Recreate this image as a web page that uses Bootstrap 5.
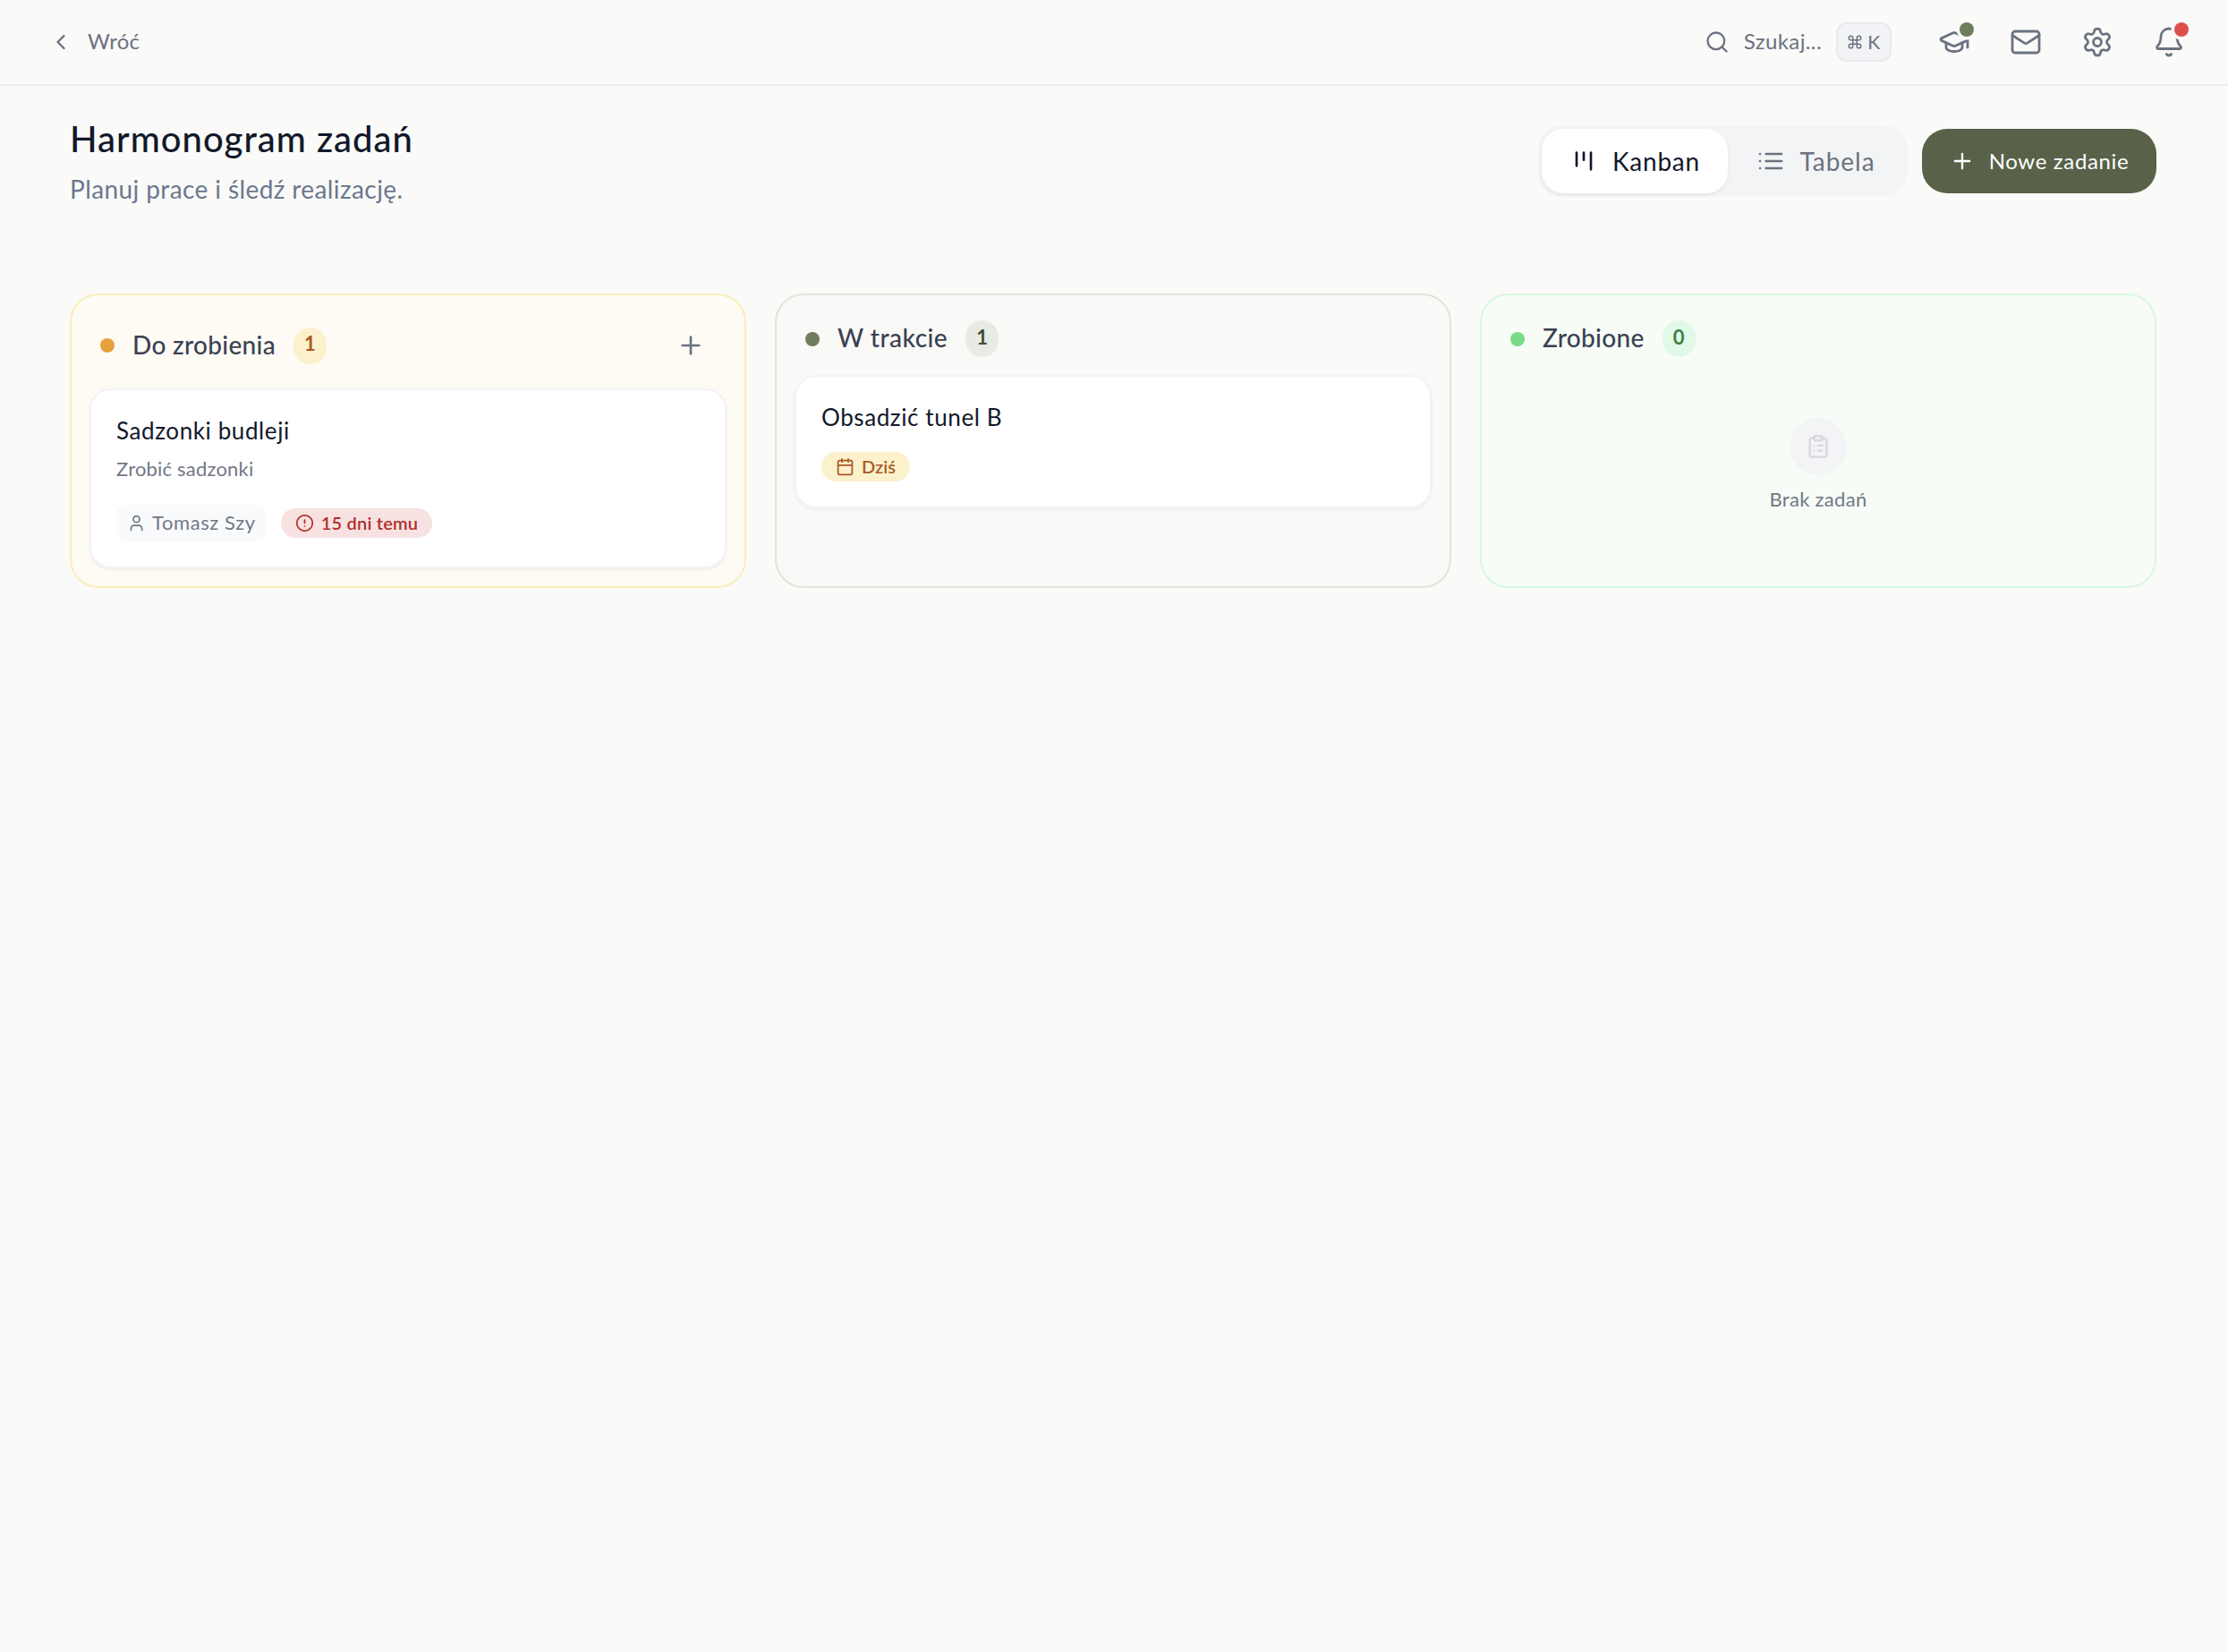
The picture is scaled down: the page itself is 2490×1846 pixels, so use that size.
<!DOCTYPE html>
<html lang="pl">
<head>
<meta charset="utf-8">
<meta name="viewport" content="width=device-width, initial-scale=1">
<title>Harmonogram zadań</title>
<link href="https://cdn.jsdelivr.net/npm/bootstrap@5.3.0/dist/css/bootstrap.min.css" rel="stylesheet">
<style>
  body { background: #fafaf8; font-family: Lato, "Open Sans", sans-serif; color: #12182a; line-height: 1.2; min-height: 100vh; }
  svg { flex: none; fill: none; stroke: currentColor; stroke-width: 2; stroke-linecap: round; stroke-linejoin: round; display: block; }
  .txt { padding-bottom: .03em; white-space: nowrap; }
  .ic20 { width: 21px; height: 21px; } .ic28 { width: 28px; height: 28px; } .ic32 { width: 32px; height: 32px; } .ic36 { width: 36px; height: 36px; }

  .topbar { height: 96px; border-bottom: 2px solid #edeef2; padding: 0 26px 0 54px; color: #6b7280; font-size: 24px; }
  .back-link { gap: 16px; color: inherit; letter-spacing: .3px; }
  .search-box { gap: 16px; letter-spacing: .4px; margin-right: 30px; }
  .key-hint { width: 62px; height: 44px; border: 2px solid #e8eaee; border-radius: 12px; background: #f2f3f6; font-size: 21px; gap: 5px; }
  .key-hint svg { width: 18px; height: 18px; }
  .tool-btn { width: 80px; height: 80px; color: #6b7280; }
  .tool-btn svg { stroke-width: 1.85; }
  .alert-dot { position: absolute; width: 16px; height: 16px; border-radius: 50%; right: 18px; top: 18px; box-shadow: 0 0 0 3.5px #fafaf8; }

  .page { padding: 30px 80px 0 78px; }
  .page-head { height: 108px; }
  .page-title { font-size: 40px; font-weight: 500; line-height: 56px; letter-spacing: 1px; margin: 1px 0 8px; }
  .page-sub { font-size: 28px; line-height: 40px; letter-spacing: .4px; color: #6b7890; }
  .switcher { height: 80px; padding: 4px; border-radius: 28px; background: #f3f4f6; margin-right: 16px; }
  .switcher .seg { height: 72px; border-radius: 24px; gap: 16px; font-size: 28px; font-weight: 400; color: #6b7280; padding: 0; }
  .seg.seg-a { width: 208px; letter-spacing: .8px; }
  .seg.seg-b { width: 197px; letter-spacing: 1px; }
  .switcher .seg.active { background: #fff; color: #12182a; box-shadow: 0 2px 4px rgba(16,24,40,.07); }
  .new-btn { width: 262px; height: 72px; border-radius: 28px; background: #596249; color: #fff; gap: 16px; font-size: 24px; font-weight: 400; letter-spacing: .65px; }

  .board { margin-top: 94px; display: grid; grid-template-columns: repeat(3, 756px); gap: 32px; }
  .lane { min-height: 329px; border: 2px solid; border-radius: 32px; padding: 20px; }
  .lane-todo { background: #fefbf5; border-color: #fbedb8; }
  .lane-doing { background: #f9f9f7; border-color: #e2e4dc; }
  .lane-done { background: #f7fcf7; border-color: #d9f7df; }
  .lane-head { padding: 8px 12px; margin-bottom: 12px; }
  .lane-dot { width: 16px; height: 16px; border-radius: 50%; margin-right: 20px; }
  .lane-name { font-size: 28px; font-weight: 500; color: #3a4252; letter-spacing: .3px; margin-right: 20px; }
  .lane-doing .lane-name { letter-spacing: .5px; }
  .count { width: 37px; height: 41px; border-radius: 20px; font-size: 22px; font-weight: 700; padding-bottom: 3px; }
  .lane-todo .lane-dot { background: #e7a13c; } .lane-todo .count { background: #fcf1cd; color: #a85a26; }
  .lane-doing .lane-dot { background: #6f7d5d; } .lane-doing .count { background: #e8ebe4; color: #424c36; }
  .lane-done .lane-dot { background: #79db88; } .lane-done .count { background: #e1f9e7; color: #3c8045; }
  .add-btn { width: 56px; height: 56px; color: #6b7280; }

  .task { border: 2px solid #f2f3f6; border-radius: 24px; background: #fff; padding: 28px; box-shadow: 0 2px 4px rgba(16,24,40,.05); }
  .task-name { font-size: 26px; font-weight: 400; line-height: 36px; letter-spacing: .6px; margin: -1px 0 21px; }
  .task-name.tight { margin-bottom: 8px; }
  .task-note { font-size: 22px; line-height: 36px; letter-spacing: .2px; color: #717885; margin: -1px 0 22px; }
  .person { height: 41px; padding: 0 12px; border-radius: 12px; background: #f9fafc; color: #717885; font-size: 22px; letter-spacing: .6px; gap: 7px; }
  .due { height: 33px; padding: 0 16px; border-radius: 17px; font-size: 20px; font-weight: 600; gap: 8px; }
  .due-late { background: #f8e1e1; color: #ae2f2a; letter-spacing: .2px; }
  .due-today { background: #fcf1cd; color: #a85a26; letter-spacing: .1px; }
  .empty-lane { padding-top: 48px; gap: 13px; font-size: 22px; line-height: 28px; color: #717885; letter-spacing: .3px; }
  .empty-icon { width: 64px; height: 64px; border-radius: 50%; background: #f3f4f6; color: #d6d8de; }
</style>
</head>
<body>
<header class="topbar d-flex align-items-center justify-content-between">
  <a href="#" class="back-link d-flex align-items-center text-decoration-none">
    <svg class="ic28" viewBox="0 0 24 24"><path d="m15 18-6-6 6-6"/></svg>
    <span class="txt">Wróć</span>
  </a>
  <div class="d-flex align-items-center">
    <div class="search-box d-flex align-items-center">
      <svg class="ic28" viewBox="0 0 24 24" stroke-width="1.8"><circle cx="11" cy="11" r="8"/><path d="m21 21-4.3-4.3"/></svg>
      <span class="txt">Szukaj...</span>
      <span class="key-hint d-flex align-items-center justify-content-center"><svg viewBox="0 0 24 24"><path d="M15 6v12a3 3 0 1 0 3-3H6a3 3 0 1 0 3 3V6a3 3 0 1 0-3 3h12a3 3 0 1 0-3-3"/></svg><span class="txt">K</span></span>
    </div>
    <div class="d-flex align-items-center">
      <a href="#" class="tool-btn position-relative d-flex align-items-center justify-content-center" aria-label="Szkolenia">
        <svg class="ic36" viewBox="0 0 24 24"><path d="M21.42 10.922a1 1 0 0 0-.019-1.838L12.83 5.18a2 2 0 0 0-1.66 0L2.6 9.08a1 1 0 0 0 0 1.832l8.57 3.908a2 2 0 0 0 1.66 0z"/><path d="M22 10v6"/><path d="M6 12.5V16a6 3 0 0 0 12 0v-3.5"/></svg>
        <span class="alert-dot" style="background:#6f7d5d"></span>
      </a>
      <a href="#" class="tool-btn d-flex align-items-center justify-content-center" aria-label="Wiadomości">
        <svg class="ic36" viewBox="0 0 24 24"><rect x="2" y="4" width="20" height="16" rx="2"/><path d="m22 7-8.991 5.727a2 2 0 0 1-2.009 0L2 7"/></svg>
      </a>
      <a href="#" class="tool-btn d-flex align-items-center justify-content-center" aria-label="Ustawienia">
        <svg class="ic36" viewBox="0 0 24 24"><path d="M9.671 4.136a2.34 2.34 0 0 1 4.659 0 2.34 2.34 0 0 0 3.319 1.915 2.34 2.34 0 0 1 2.33 4.033 2.34 2.34 0 0 0 0 3.831 2.34 2.34 0 0 1-2.33 4.033 2.34 2.34 0 0 0-3.319 1.915 2.34 2.34 0 0 1-4.659 0 2.34 2.34 0 0 0-3.32-1.915 2.34 2.34 0 0 1-2.33-4.033 2.34 2.34 0 0 0 0-3.831A2.34 2.34 0 0 1 6.35 6.051a2.34 2.34 0 0 0 3.319-1.915"/><circle cx="12" cy="12" r="3"/></svg>
      </a>
      <a href="#" class="tool-btn position-relative d-flex align-items-center justify-content-center" aria-label="Powiadomienia">
        <svg class="ic36" viewBox="0 0 24 24"><path d="M10.268 21a2 2 0 0 0 3.464 0"/><path d="M3.262 15.326A1 1 0 0 0 4 17h16a1 1 0 0 0 .74-1.673C19.41 13.956 18 12.499 18 8A6 6 0 0 0 6 8c0 4.499-1.411 5.956-2.738 7.326"/></svg>
        <span class="alert-dot" style="background:#df504d"></span>
      </a>
    </div>
  </div>
</header>

<main class="page">
  <div class="page-head d-flex justify-content-between align-items-center">
    <div class="align-self-start">
      <h1 class="page-title">Harmonogram zadań</h1>
      <p class="page-sub mb-0">Planuj prace i śledź realizację.</p>
    </div>
    <div class="d-flex align-items-center">
      <div class="switcher d-flex">
        <button class="btn border-0 seg seg-a active d-flex align-items-center justify-content-center"><svg class="ic32" viewBox="0 0 24 24"><path d="M6 5v11M12 5v6M18 5v14"/></svg><span class="txt">Kanban</span></button>
        <button class="btn border-0 seg seg-b d-flex align-items-center justify-content-center"><svg class="ic32" viewBox="0 0 24 24"><path d="M3 6h.01M3 12h.01M3 18h.01M8 6h13M8 12h13M8 18h13"/></svg><span class="txt">Tabela</span></button>
      </div>
      <button class="btn border-0 new-btn d-flex align-items-center justify-content-center"><svg class="ic28" viewBox="0 0 24 24"><path d="M5 12h14M12 5v14"/></svg><span class="txt">Nowe zadanie</span></button>
    </div>
  </div>

  <div class="board">
    <section class="lane lane-todo">
      <div class="lane-head d-flex align-items-center">
        <span class="lane-dot"></span><span class="lane-name txt">Do zrobienia</span><span class="count d-flex align-items-center justify-content-center">1</span>
        <button class="btn border-0 p-0 add-btn ms-auto d-flex align-items-center justify-content-center" aria-label="Dodaj"><svg class="ic32" viewBox="0 0 24 24"><path d="M5 12h14M12 5v14"/></svg></button>
      </div>
      <article class="task">
        <div class="task-name tight">Sadzonki budleji</div>
        <div class="task-note">Zrobić sadzonki</div>
        <div class="d-flex align-items-center gap-3">
          <span class="person d-flex align-items-center"><svg class="ic20" viewBox="0 0 24 24"><path d="M19 21v-2a4 4 0 0 0-4-4H9a4 4 0 0 0-4 4v2"/><circle cx="12" cy="7" r="4"/></svg><span class="txt">Tomasz Szy</span></span>
          <span class="due due-late d-flex align-items-center"><svg class="ic20" viewBox="0 0 24 24"><circle cx="12" cy="12" r="10"/><path d="M12 8v4M12 16h.01"/></svg><span class="txt">15 dni temu</span></span>
        </div>
      </article>
    </section>

    <section class="lane lane-doing">
      <div class="lane-head d-flex align-items-center">
        <span class="lane-dot"></span><span class="lane-name txt">W trakcie</span><span class="count d-flex align-items-center justify-content-center">1</span>
      </div>
      <article class="task">
        <div class="task-name">Obsadzić tunel B</div>
        <div class="d-flex align-items-center">
          <span class="due due-today d-flex align-items-center"><svg class="ic20" viewBox="0 0 24 24"><path d="M8 2v4M16 2v4M3 10h18"/><rect x="3" y="4" width="18" height="18" rx="2"/></svg><span class="txt">Dziś</span></span>
        </div>
      </article>
    </section>

    <section class="lane lane-done">
      <div class="lane-head d-flex align-items-center">
        <span class="lane-dot"></span><span class="lane-name txt">Zrobione</span><span class="count d-flex align-items-center justify-content-center">0</span>
      </div>
      <div class="empty-lane d-flex flex-column align-items-center">
        <span class="empty-icon d-flex align-items-center justify-content-center"><svg class="ic28" viewBox="0 0 24 24"><rect x="8" y="2" width="8" height="4" rx="1"/><path d="M16 4h2a2 2 0 0 1 2 2v14a2 2 0 0 1-2 2H6a2 2 0 0 1-2-2V6a2 2 0 0 1 2-2h2M12 11h4M12 16h4M8 11h.01M8 16h.01"/></svg></span>
        <span>Brak zadań</span>
      </div>
    </section>
  </div>
</main>
<script src="https://cdn.jsdelivr.net/npm/bootstrap@5.3.0/dist/js/bootstrap.bundle.min.js"></script>
</body>
</html>
